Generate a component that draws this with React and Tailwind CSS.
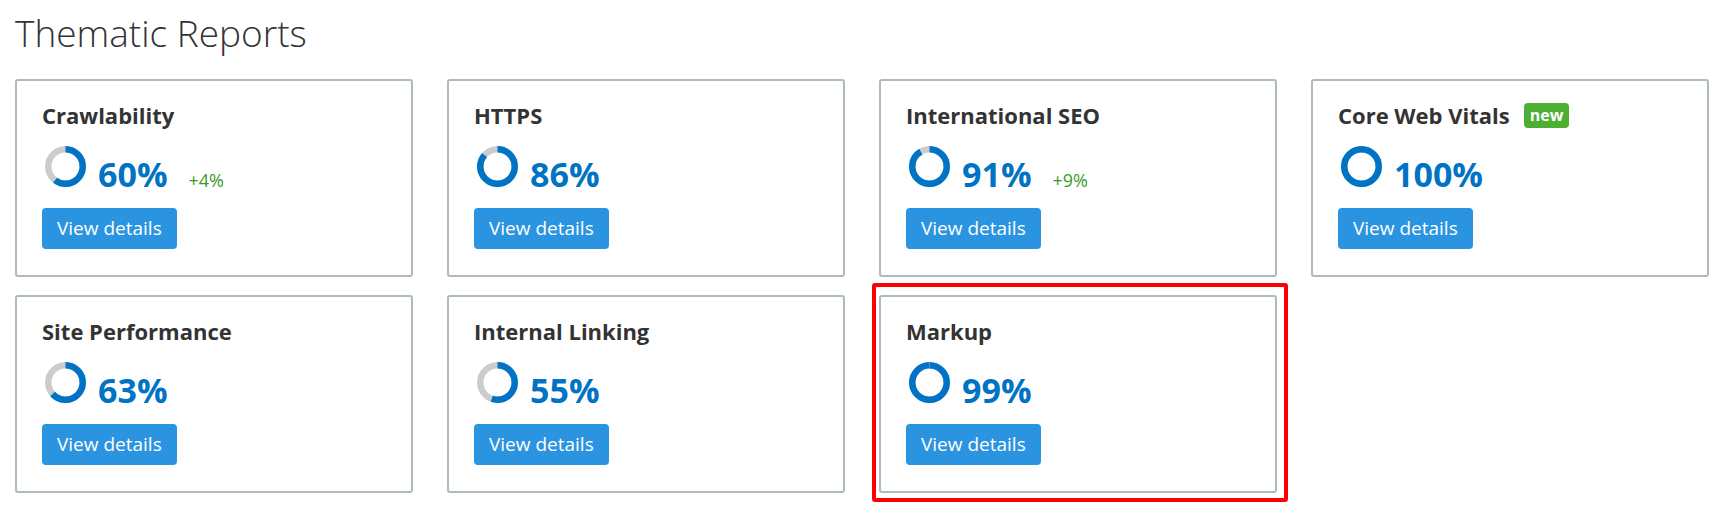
import React from "react";

const FONT = { fontFamily: '"Open Sans", "Noto Sans", Arial, sans-serif' };

function Donut({ value }) {
  const r = 17.25;
  const c = 2 * Math.PI * r;
  const blue = (value / 100) * c;
  return (
    <svg width="41" height="41" viewBox="0 0 41 41" className="ml-[3px] shrink-0">
      <circle cx="20.5" cy="20.5" r={r} fill="none" stroke="#cccccc" strokeWidth="6.5" />
      <circle
        cx="20.5"
        cy="20.5"
        r={r}
        fill="none"
        stroke="#0073c4"
        strokeWidth="6.5"
        strokeDasharray={`${blue} ${c}`}
        transform="rotate(-90 20.5 20.5)"
      />
    </svg>
  );
}

function Card({ title, value, delta, badge, highlight }) {
  return (
    <div className="relative h-[198px] rounded-[3px] border-2 border-[#adbabf] bg-white px-[25px] pt-[20px]">
      {highlight && (
        <div className="pointer-events-none absolute -left-[9px] -right-[13px] -top-[14px] -bottom-[11px] rounded-[3px] border-4 border-[#ff0000]" />
      )}
      <div className="flex items-center">
        <span className="text-[22px] font-bold leading-[28px] text-[#333333]">{title}</span>
        {badge && (
          <span className="ml-[14px] flex h-[25px] items-center rounded-[4px] bg-[#4caf32] px-[6px] text-[16px] font-bold leading-none text-white">
            {badge}
          </span>
        )}
      </div>
      <div className="mt-[17px] flex items-baseline">
        <Donut value={value} />
        <span className="ml-[12px] text-[34px] font-bold leading-[40px] text-[#0073c4]">{value}%</span>
        {delta && (
          <span className="ml-[21px] text-[18px] leading-[24px] text-[#3a9c1f]">{delta}</span>
        )}
      </div>
      <button className="mt-[14px] flex h-[41px] items-center rounded-[4px] bg-[#2b94e1] px-[15px] text-[19px] leading-none text-white">
        View details
      </button>
    </div>
  );
}

export default function App() {
  const cards = [
    { title: "Crawlability", value: 60, delta: "+4%" },
    { title: "HTTPS", value: 86 },
    { title: "International SEO", value: 91, delta: "+9%" },
    { title: "Core Web Vitals", value: 100, badge: "new" },
    { title: "Site Performance", value: 63 },
    { title: "Internal Linking", value: 55 },
    { title: "Markup", value: 99, highlight: true },
  ];
  return (
    <div className="min-h-[512px] w-[1730px] bg-white pl-[15px] pt-[11px]" style={FONT}>
      <h1 className="text-[37px] font-light leading-[44px] text-[#333333]">Thematic Reports</h1>
      <div className="mt-[24px] grid grid-cols-[repeat(4,398px)] gap-x-[34px] gap-y-[18px]">
        {cards.map((c) => (
          <Card key={c.title} {...c} />
        ))}
      </div>
    </div>
  );
}
